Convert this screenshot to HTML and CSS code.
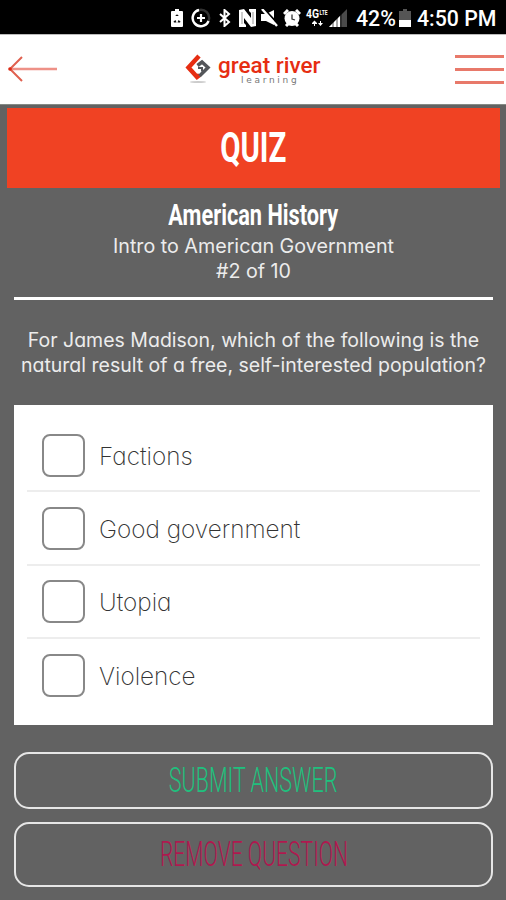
FILE: index.html
```html
<!DOCTYPE html>
<html lang="en">
<head>
  <meta charset="UTF-8" />
  <meta name="viewport" content="width=device-width, initial-scale=1.0"/>
  <title>Quiz - Great River Learning</title>
  <link rel="stylesheet" href="styles.css">
</head>
<body>

  <div class="status-bar">
    <div class="status-icons">
      <svg class="saver" width="12" height="18" viewBox="0 0 12 18">
        <path d="M4 0h4v2h3a1 1 0 0 1 1 1v14a1 1 0 0 1-1 1H1a1 1 0 0 1-1-1V3a1 1 0 0 1 1-1h3z" fill="#fff"/>
        <path d="M4.500 7a1.500 1.500 0 0 1 3 0zM2.500 12.500l2-1.500 1 2.500H3zM9.500 12.500l-2-1.500-1 2.500H9z" fill="#111"/>
      </svg>
      <svg class="data" width="20" height="20" viewBox="0 0 20 20" fill="none">
        <circle cx="10" cy="10" r="8.200" stroke="#333" stroke-width="2.400"/>
        <path d="M8 2A8.200 8.200 0 1 0 17.500 13" stroke="#fff" stroke-width="2.400"/>
        <path d="M10 6v8M6 10h8" stroke="#fff" stroke-width="2.200"/>
      </svg>
      <svg class="bluetooth" width="12" height="18" viewBox="0 0 12 18">
        <path d="M1 5l9 8-4.500 4V1L10 5l-9 8" fill="none" stroke="#fff" stroke-width="2"/>
      </svg>
      <svg class="nfc" width="17" height="18" viewBox="0 0 17 18">
        <path d="M0 1l5-1 7 9V4l-2-2V0h7v17l-5 1-7-9v5l2 2v2H0z" fill="#fff"/>
        <path d="M3 3v12M14 3v12" stroke="#555" stroke-width=".6"/>
      </svg>
      <svg class="mute" width="17" height="18" viewBox="0 0 17 18">
        <path d="M0 5h5l8-4v15l-8-4H0z" fill="#fff"/>
        <path d="M3 0l14 15" stroke="#000" stroke-width="2"/>
        <path d="M1 0l15 17" stroke="#fff" stroke-width="2.400"/>
      </svg>
      <svg class="alarm" width="18" height="18" viewBox="0 0 18 18">
        <path d="M1 5l4-4M17 5l-4-4M3 17l3-3M15 17l-3-3" stroke="#fff" stroke-width="3"/>
        <circle cx="9" cy="9.500" r="7.500" fill="#fff"/>
        <path d="M9 5.500v4.500l3 1" stroke="#333" stroke-width="1.300" fill="none"/>
      </svg>
      <svg class="network" width="23" height="18" viewBox="0 0 23 18">
        <text class="net" x="0" y="9" textLength="13" lengthAdjust="spacingAndGlyphs">4G</text>
        <text class="lte" x="13.500" y="6" textLength="8" lengthAdjust="spacingAndGlyphs">LTE</text>
        <path d="M6 14l2.500-2.500L11 14v1H9v2H8v-2H6zM12 14h2v-2h1v2h2l-2.500 3z" fill="#fff"/>
      </svg>
      <svg width="18" height="18" viewBox="0 0 18 18">
        <path d="M18 0v18H0z" fill="#4a4a4a"/>
        <path d="M11 7v11H0z" fill="#fff"/>
        <path d="M4 12v6M8 8v10M12 5v13" stroke="#000" stroke-width=".7"/>
      </svg>
    </div>
    <span class="status-text percent">42%</span>
    <svg class="battery" width="12" height="18" viewBox="0 0 12 18">
      <path d="M4 0h4v2h4v16H0V2h4z" fill="#555"/>
      <path d="M0 11h12v7H0z" fill="#fff"/>
    </svg>
    <span class="status-text clock">4:50 PM</span>
  </div>

  <div class="header">
    <a href="#" class="back">
      <svg width="50" height="28" viewBox="0 0 50 28" fill="none">
        <path d="M2 14H49" stroke="#ee9187" stroke-width="2.500"/>
        <path d="M14 2L2 14l12 12" stroke="#e0604f" stroke-width="2"/>
        <circle cx="2" cy="14" r="1.800" fill="#dc2a15"/>
      </svg>
    </a>
    <div class="brand">
      <svg width="26" height="30" viewBox="0 0 26 30" fill="none">
        <path d="M14 2L3.500 13.500 12 23l2.500-2" stroke="#e62d12" stroke-width="4.500"/>
        <path d="M12.500 11.500L17 8l6 5.500-8.500 8.500" stroke="#54565a" stroke-width="3.500"/>
        <path d="M13 14h4v3.500" stroke="#54565a" stroke-width="2"/>
        <ellipse cx="13" cy="28" rx="8" ry="1" fill="#ccc"/>
      </svg>
      <div class="brand-text">
        <span class="brand-name">great river</span>
        <span class="brand-sub">learning</span>
      </div>
    </div>
    <div class="menu">
      <span></span>
      <span></span>
      <span></span>
    </div>
  </div>

  <div class="main">
    <h1 class="banner"><span>QUIZ</span></h1>

    <div class="quiz-info">
      <h2><span>American History</span></h2>
      <p>Intro to American Government</p>
      <p class="count">#2 of 10</p>
    </div>

    <div class="question">
      <p>For James Madison, which of the following is the</p>
      <p>natural result of a free, self-interested population?</p>
    </div>

    <div class="answers">
      <label class="answer"><input type="checkbox" /><span>Factions</span></label>
      <label class="answer"><input type="checkbox" /><span>Good government</span></label>
      <label class="answer"><input type="checkbox" /><span>Utopia</span></label>
      <label class="answer"><input type="checkbox" /><span>Violence</span></label>
    </div>

    <button class="submit"><span>SUBMIT ANSWER</span></button>
    <button class="remove"><span>REMOVE QUESTION</span></button>
  </div>

</body>
</html>
```
FILE: styles.css
```css
* { box-sizing: border-box; margin: 0; padding: 0; }
body {
  width: 506px;
  height: 900px;
  overflow: hidden;
  font-family: Inter, sans-serif;
  font-feature-settings: "cv11";
  background: #626262;
  color: #ececec;
}

svg {
  display: block;
  flex: none;
}

.status-bar {
  height: 34px;
  background: #000;
  color: #fff;
  display: flex;
  align-items: center;
  padding-left: 171px;
}

.status-icons {
  display: flex;
  align-items: center;
  width: 178px;
  margin-right: 7px;
  padding-top: 2px;
}

.saver,
.data,
.bluetooth { margin-right: 8px; }
.nfc,
.mute,
.alarm { margin-right: 5px; }

.network { overflow: visible; }

.status-text {
  font: 500 21.300px/34px Roboto, sans-serif;
  white-space: nowrap;
  padding-top: 3px;
}

.percent { width: 43px; }
.battery { margin-top: 2px; }
.clock { margin-left: 6px; }

.net { font: bold 12px Roboto, sans-serif; fill: #fff; }
.lte { font: bold 7px Roboto, sans-serif; fill: #fff; }

.header {
  height: 71px;
  background: #fff;
  border-top: 1px solid #bbb;
  border-bottom: 1px solid #858a85;
  display: flex;
  justify-content: space-between;
  padding: 20px 2px 0 8px;
}

.brand {
  display: flex;
  gap: 7px;
  margin-left: -5px;
  margin-top: -1px;
}

.brand-text {
  display: flex;
  flex-direction: column;
  width: 105px;
}

.brand-name {
  font: 500 22.500px/22px Roboto, sans-serif;
  color: #e62d12;
  white-space: nowrap;
}

.brand-sub {
  font: 9px/9px "DejaVu Sans", sans-serif;
  color: #777;
  letter-spacing: 2.700px;
  margin-left: 23px;
}

.menu {
  width: 49px;
  display: flex;
  flex-direction: column;
  gap: 10px;
}

.menu span {
  height: 3px;
  background: #e8796a;
}

.main {
  padding: 3px 13px 0 14px;
}

.banner {
  height: 80px;
  margin: 0 -7px;
  background: #f04223;
  color: #fff;
  text-align: center;
  font: bold 42px/80px Roboto, sans-serif;
}

.banner span,
h2 span,
button span {
  display: inline-block;
  transform: scaleX(0.7);
}

.quiz-info {
  text-align: center;
  height: 112px;
  padding-top: 11px;
  border-bottom: 3px solid #fff;
}

.quiz-info h2 {
  font: bold 29px/32px Roboto, sans-serif;
  color: #fff;
}

h2 span { transform: scaleX(0.75); }

.quiz-info p {
  font-size: 19.700px;
  line-height: 25px;
  white-space: nowrap;
  margin-top: 3px;
}

.quiz-info .count { margin-top: 0; }

.question {
  height: 105px;
  padding-top: 28px;
  text-align: center;
  font-size: 19.500px;
  line-height: 25px;
  white-space: nowrap;
}

.answers {
  height: 320px;
  background: #fff;
  padding: 14px 13px 0;
}

.answer {
  display: flex;
  align-items: center;
  height: 73px;
  padding-left: 15px;
  gap: 14px;
  border-bottom: 2px solid #ededed;
  color: #333;
  font-size: 24.300px;
  font-weight: 200;
}

.answer:first-child { padding-top: 2px; }
.answer:nth-child(2) { height: 74px; }
.answer:last-child { border-bottom: none; }

.answer span { padding-top: 1px; }

.answer input {
  appearance: none;
  width: 43px;
  height: 43px;
  border: 2px solid #888;
  border-radius: 8px;
  background: #fff;
}

button {
  display: block;
  width: 100%;
  height: 57px;
  margin-top: 27px;
  background: none;
  border: 2px solid #e6e6e6;
  border-radius: 15px;
  font: 300 35px/50px Roboto, sans-serif;
  white-space: nowrap;
}

.submit { color: #1fc07e; }
.submit span { transform: scaleX(0.615); }

.remove {
  height: 65px;
  margin-top: 13px;
  color: #b0184f;
}
.remove span { transform: scaleX(0.603); }
```
